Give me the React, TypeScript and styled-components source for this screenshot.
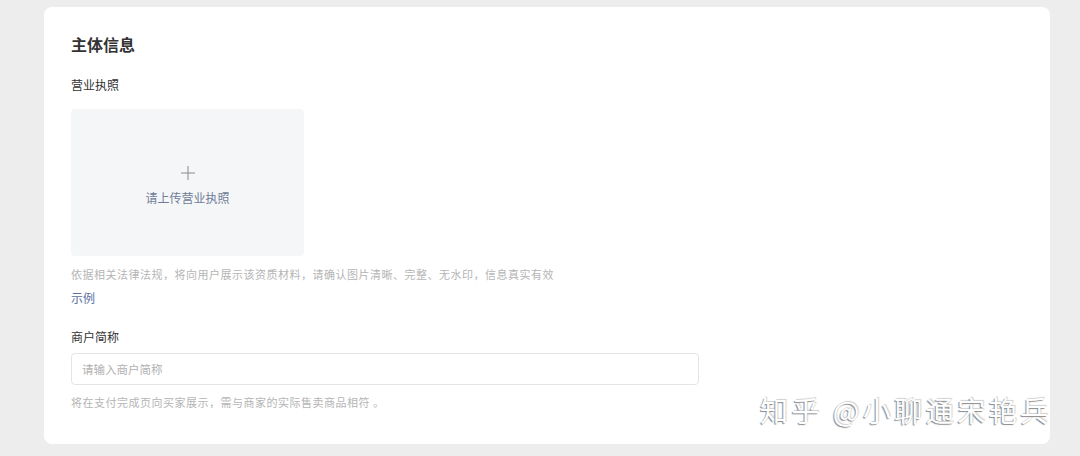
import styled, { createGlobalStyle } from "styled-components";

const GlobalStyle = createGlobalStyle`
  html, body {
    margin: 0;
    padding: 0;
    background: #ededed;
    font-family: "Noto Sans CJK SC", "Noto Sans", sans-serif;
  }
`;

const Page = styled.div`
  width: 1080px;
  height: 456px;
  padding: 7px 30px 12px 44px;
  box-sizing: border-box;
`;

const Card = styled.section`
  position: relative;
  height: 437px;
  background: #fff;
  border-radius: 8px;
  padding: 26px 27px 0;
  box-sizing: border-box;
  display: flex;
  flex-direction: column;
`;

const Title = styled.h2`
  margin: 0;
  font-size: 16px;
  line-height: 22px;
  font-weight: 600;
  color: #333;
`;

const Label = styled.div<{ $top: number }>`
  margin-top: ${(p) => p.$top}px;
  font-size: 12px;
  line-height: 17px;
  color: #333;
`;

const Upload = styled.div`
  margin-top: 16px;
  width: 233px;
  height: 147px;
  background: #f5f6f8;
  border-radius: 4px;
  display: flex;
  flex-direction: column;
  align-items: center;
  justify-content: center;
  gap: 8px;
  padding-top: 6px;
  box-sizing: border-box;
`;

const Plus = styled.svg`
  width: 16px;
  height: 16px;
`;

const UploadText = styled.span`
  font-size: 12px;
  line-height: 17px;
  color: #6f7c96;
`;

const Hint = styled.div<{ $top: number }>`
  margin-top: ${(p) => p.$top}px;
  font-size: 11px;
  letter-spacing: 0.5px;
  line-height: 16px;
  color: #b5b5b5;
`;

const Link = styled.a`
  margin-top: 7px;
  font-size: 12px;
  line-height: 17px;
  color: #5a6fa3;
  text-decoration: none;
  align-self: flex-start;
`;

const Input = styled.input`
  margin-top: 8px;
  width: 628px;
  height: 32px;
  box-sizing: border-box;
  border: 1px solid #e4e4e4;
  border-radius: 4px;
  padding: 0 10px;
  font-family: inherit;
  font-size: 11.5px;
  outline: none;
  &::placeholder {
    color: #b0b0b0;
  }
`;

const Watermark = styled.div`
  position: absolute;
  left: 716px;
  bottom: 14px;
  font-size: 28px;
  letter-spacing: 3.5px;
  color: #fff;
  text-shadow: -1px 1px 1px #8a8a8a, 1px -1px 1px #d0d0d0;
  white-space: nowrap;
`;

export default function App() {
  return (
    <>
      <GlobalStyle />
      <Page>
        <Card>
          <Title>主体信息</Title>
          <Label $top={21}>营业执照</Label>
          <Upload>
            <Plus viewBox="0 0 16 16">
              <path d="M8 1v14M1 8h14" stroke="#8a8a8a" strokeWidth="1" fill="none" />
            </Plus>
            <UploadText>请上传营业执照</UploadText>
          </Upload>
          <Hint $top={10}>
            依据相关法律法规，将向用户展示该资质材料，请确认图片清晰、完整、无水印，信息真实有效
          </Hint>
          <Link>示例</Link>
          <Label $top={22}>商户简称</Label>
          <Input placeholder="请输入商户简称" />
          <Hint $top={9}>将在支付完成页向买家展示，需与商家的实际售卖商品相符 。</Hint>
          <Watermark>知乎 @小聊通宋艳兵</Watermark>
        </Card>
      </Page>
    </>
  );
}
